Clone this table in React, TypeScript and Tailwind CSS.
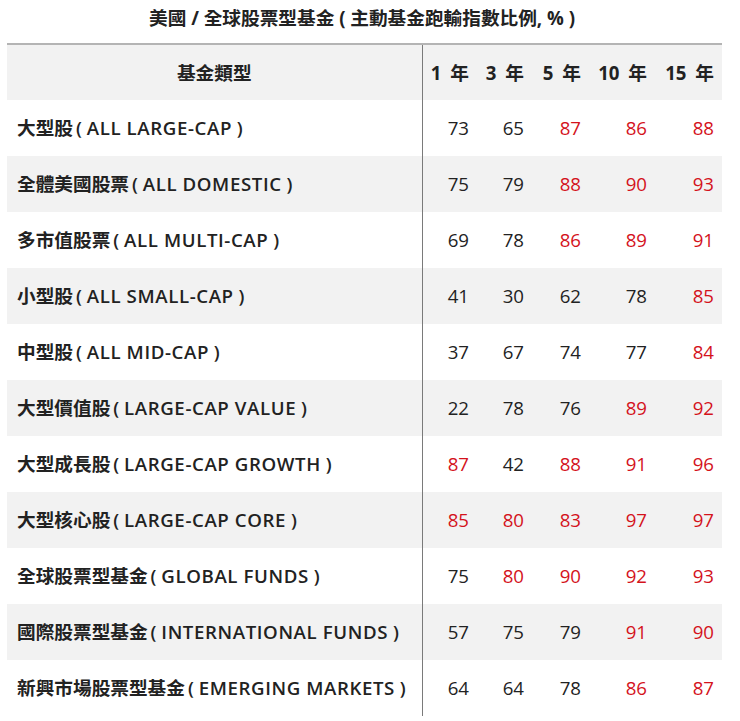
const rows: [string, string, number[]][] = [
  ["大型股", "ALL LARGE-CAP", [73, 65, 87, 86, 88]],
  ["全體美國股票", "ALL DOMESTIC", [75, 79, 88, 90, 93]],
  ["多市值股票", "ALL MULTI-CAP", [69, 78, 86, 89, 91]],
  ["小型股", "ALL SMALL-CAP", [41, 30, 62, 78, 85]],
  ["中型股", "ALL MID-CAP", [37, 67, 74, 77, 84]],
  ["大型價值股", "LARGE-CAP VALUE", [22, 78, 76, 89, 92]],
  ["大型成長股", "LARGE-CAP GROWTH", [87, 42, 88, 91, 96]],
  ["大型核心股", "LARGE-CAP CORE", [85, 80, 83, 97, 97]],
  ["全球股票型基金", "GLOBAL FUNDS", [75, 80, 90, 92, 93]],
  ["國際股票型基金", "INTERNATIONAL FUNDS", [57, 75, 79, 91, 90]],
  ["新興市場股票型基金", "EMERGING MARKETS", [64, 64, 78, 86, 87]],
]

const years = [1, 3, 5, 10, 15]
const widths = ["w-[55px]", "w-[55px]", "w-[57px]", "w-[66px]", "w-[67px]"]

export default function App() {
  return (
    <div className="w-[740px] bg-white text-[18.67px] text-[#222] font-['Open_Sans','Noto_Sans_CJK_TC',sans-serif]">
      <div className="h-[43px] leading-[36px] text-center font-bold whitespace-nowrap pr-[16px]">
        美國 / 全球股票型基金 ( 主動基金跑輸指數比例, % )
      </div>
      <div className="ml-[7px] w-[715px] border-t-2 border-[#b4b4b4]">
        <table className="w-full border-collapse table-fixed">
          <thead>
            <tr className="h-[55px] bg-[#f2f2f2]">
              <th className="w-[415px] border-r border-[#7a7a7a] text-center font-bold">基金類型</th>
              {years.map((y, i) => (
                <th key={y} className={`${widths[i]} text-right pr-[8px] font-bold whitespace-nowrap`}>
                  {y} <span className="ml-[4px]">年</span>
                </th>
              ))}
            </tr>
          </thead>
          <tbody>
            {rows.map(([zh, en, vals], r) => (
              <tr key={zh} className={r % 2 === 1 ? "h-[56px] bg-[#f2f2f2]" : "h-[56px] bg-white"}>
                <td className="border-r border-[#7a7a7a] pl-[10px] font-semibold whitespace-nowrap">
                  {zh}
                  <span className="ml-[3px]">( </span>
                  <span className="tracking-[0.6px]">{en}</span> )
                </td>
                {vals.map((v, i) => (
                  <td key={i} className={v >= 80 ? "text-right pr-[8px] text-[#d4121c]" : "text-right pr-[8px]"}>
                    {v}
                  </td>
                ))}
              </tr>
            ))}
          </tbody>
        </table>
      </div>
    </div>
  )
}
